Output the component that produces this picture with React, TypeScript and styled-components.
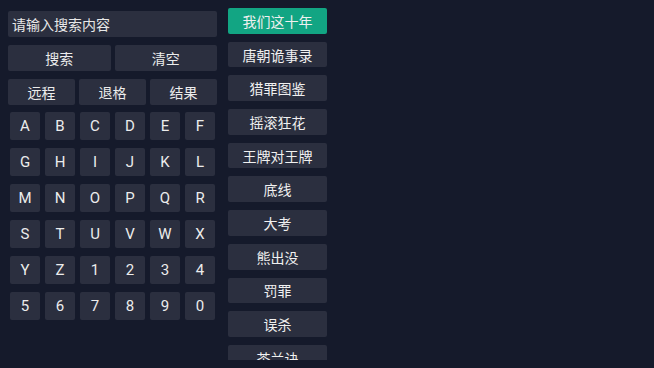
import styled, { createGlobalStyle } from "styled-components";

const GlobalStyle = createGlobalStyle`
  html, body {
    margin: 0;
    padding: 0;
    background: #151a2b;
    overflow: hidden;
  }
  * { box-sizing: border-box; }
`;

const Screen = styled.div`
  width: 654px;
  height: 368px;
  display: flex;
  align-items: flex-start;
  gap: 11px;
  padding-left: 8px;
  background: #151a2b;
  font-family: "Noto Sans CJK SC", Roboto, sans-serif;
  color: #ececec;
`;

const LeftPanel = styled.div`
  width: 209px;
  margin-top: 11px;
  display: flex;
  flex-direction: column;
`;

const SearchBox = styled.div`
  height: 26px;
  background: #2b2f3f;
  border-radius: 2px;
  padding-left: 4px;
  display: flex;
  align-items: center;
  font-size: 14px;
  color: #e8e8e8;
`;

const ButtonRow = styled.div`
  display: flex;
  gap: 4px;
  margin-top: 8px;
`;

const ActionButton = styled.div`
  flex: 1;
  height: 26px;
  background: #2b2f3f;
  border-radius: 2px;
  display: flex;
  align-items: center;
  justify-content: center;
  font-size: 14px;
`;

const KeyGrid = styled.div`
  display: grid;
  grid-template-columns: repeat(6, 30px);
  grid-auto-rows: 28px;
  column-gap: 5px;
  row-gap: 8px;
  margin: 7px 0 0 2px;
`;

const Key = styled.div`
  background: #2b2f3f;
  border-radius: 2px;
  display: flex;
  align-items: center;
  justify-content: center;
  font-family: Roboto, sans-serif;
  font-size: 15px;
`;

const TitleList = styled.div`
  width: 99px;
  height: 352px;
  margin-top: 8px;
  overflow: hidden;
  display: flex;
  flex-direction: column;
  gap: 8px;
`;

const TitleItem = styled.div<{ $active?: boolean }>`
  flex: none;
  height: 25.7px;
  border-radius: 2px;
  background: ${({ $active }) => ($active ? "#12a583" : "#2b2f3f")};
  display: flex;
  align-items: center;
  justify-content: center;
  font-size: 14px;
  color: #f0f0f0;
`;

const keys = "ABCDEFGHIJKLMNOPQRSTUVWXYZ1234567890".split("");

const titles = [
  "我们这十年",
  "唐朝诡事录",
  "猎罪图鉴",
  "摇滚狂花",
  "王牌对王牌",
  "底线",
  "大考",
  "熊出没",
  "罚罪",
  "误杀",
  "茶兰诀",
];

export default function App() {
  return (
    <>
      <GlobalStyle />
      <Screen>
        <LeftPanel>
          <SearchBox>请输入搜索内容</SearchBox>
          <ButtonRow>
            <ActionButton>搜索</ActionButton>
            <ActionButton>清空</ActionButton>
          </ButtonRow>
          <ButtonRow>
            <ActionButton>远程</ActionButton>
            <ActionButton>退格</ActionButton>
            <ActionButton>结果</ActionButton>
          </ButtonRow>
          <KeyGrid>
            {keys.map((k) => (
              <Key key={k}>{k}</Key>
            ))}
          </KeyGrid>
        </LeftPanel>
        <TitleList>
          {titles.map((t, i) => (
            <TitleItem key={t} $active={i === 0}>
              {t}
            </TitleItem>
          ))}
        </TitleList>
      </Screen>
    </>
  );
}
